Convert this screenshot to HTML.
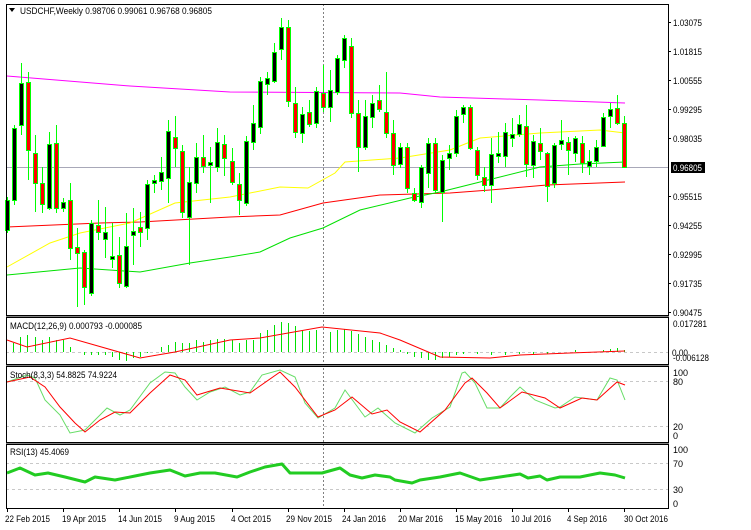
<!DOCTYPE html>
<html><head><meta charset="utf-8"><style>
html,body{margin:0;padding:0;background:#fff;width:751px;height:530px;overflow:hidden}
svg{display:block}
text{font-family:"Liberation Sans",sans-serif;font-size:9px;fill:#000}
.w{stroke:#00ff00;stroke-width:1}
.b{fill:#000;stroke:#00ff00;stroke-width:1}
.r{fill:#ff0000;stroke:#00ff00;stroke-width:1}
.h{stroke:#00e000;stroke-width:1}
</style></head><body>
<svg width="751" height="530" viewBox="0 0 751 530" xmlns="http://www.w3.org/2000/svg">
<!-- gridlines / levels -->
<line x1="6" y1="167.5" x2="668" y2="167.5" stroke="#a8a8b8" stroke-width="1"/>
<g stroke="#c8c8c8" stroke-dasharray="3,3">
<line x1="6" y1="352.5" x2="668" y2="352.5"/>
<line x1="6" y1="381.5" x2="668" y2="381.5"/>
<line x1="6" y1="426.5" x2="668" y2="426.5"/>
<line x1="6" y1="463.5" x2="668" y2="463.5"/>
<line x1="6" y1="489.5" x2="668" y2="489.5"/>
</g>
<line x1="323.5" y1="4" x2="323.5" y2="508" stroke="#808080" stroke-dasharray="2,2"/>

<!-- moving averages -->
<polyline fill="none" stroke="#ff00ff" points="7,76 130,86 230,92 400,93 440,97 540,100 625,103"/>
<polyline fill="none" stroke="#ff0000" points="7,227 100,223 140,222 230,217 280,215 323,203 380,195 450,193 490,190 547,185 625,182"/>
<polyline fill="none" stroke="#ffff00" points="7,267 50,243 80,233 130,223 175,203 230,197 280,187 308,188 335,173 345,162 400,158 450,150 480,138 540,133 600,130 625,133"/>
<polyline fill="none" stroke="#00e000" points="7,275 80,268 140,272 190,263 230,257 260,252 290,238 323,228 360,210 410,198 440,192 480,182 540,167 580,164 625,162"/>

<!-- candles -->
<g id="c">
<line class="w" x1="7.5" y1="197" x2="7.5" y2="233"/><rect class="b" x="5.5" y="200.5" width="4" height="30"/>
<line class="w" x1="14.5" y1="125" x2="14.5" y2="205"/><rect class="b" x="12.5" y="128.5" width="4" height="72"/>
<line class="w" x1="21.5" y1="63" x2="21.5" y2="135"/><rect class="b" x="19.5" y="83.5" width="4" height="42"/>
<line class="w" x1="28.5" y1="72" x2="28.5" y2="180"/><rect class="r" x="26.5" y="82.5" width="4" height="68"/>
<line class="w" x1="35.5" y1="135" x2="35.5" y2="212"/><rect class="r" x="33.5" y="153.5" width="4" height="30"/>
<line class="w" x1="42.5" y1="167" x2="42.5" y2="213"/><rect class="r" x="40.5" y="183.5" width="4" height="21"/>
<line class="w" x1="49.5" y1="132" x2="49.5" y2="210"/><rect class="b" x="47.5" y="144.5" width="4" height="64"/>
<line class="w" x1="56.5" y1="125" x2="56.5" y2="213"/><rect class="r" x="54.5" y="143.5" width="4" height="65"/>
<line class="w" x1="63.5" y1="198" x2="63.5" y2="212"/><rect class="b" x="61.5" y="202.5" width="4" height="6"/>
<line class="w" x1="70.5" y1="183" x2="70.5" y2="260"/><rect class="r" x="68.5" y="200.5" width="4" height="48"/>
<line class="w" x1="77.5" y1="228" x2="77.5" y2="307"/><rect class="r" x="75.5" y="247.5" width="4" height="6"/>
<line class="w" x1="84.5" y1="250" x2="84.5" y2="305"/><rect class="r" x="82.5" y="252.5" width="4" height="35"/>
<line class="w" x1="91.5" y1="220" x2="91.5" y2="296"/><rect class="b" x="89.5" y="223.5" width="4" height="70"/>
<line class="w" x1="98.5" y1="200" x2="98.5" y2="240"/><rect class="r" x="96.5" y="225.5" width="4" height="7"/>
<line class="w" x1="105.5" y1="207" x2="105.5" y2="258"/><rect class="b" x="103.5" y="232.5" width="4" height="7"/>
<line class="w" x1="112.5" y1="223" x2="112.5" y2="268"/><rect class="b" x="110.5" y="256.5" width="4" height="3"/>
<line class="w" x1="119.5" y1="237" x2="119.5" y2="288"/><rect class="r" x="117.5" y="255.5" width="4" height="28"/>
<line class="w" x1="126.5" y1="213" x2="126.5" y2="288"/><rect class="b" x="124.5" y="246.5" width="4" height="40"/>
<line class="w" x1="133.5" y1="208" x2="133.5" y2="265"/><rect class="b" x="131.5" y="231.5" width="4" height="4"/>
<line class="w" x1="140.5" y1="212" x2="140.5" y2="247"/><rect class="r" x="138.5" y="227.5" width="4" height="5"/>
<line class="w" x1="147.5" y1="180" x2="147.5" y2="240"/><rect class="b" x="145.5" y="184.5" width="4" height="44"/>
<line class="w" x1="154.5" y1="175" x2="154.5" y2="193"/><rect class="b" x="152.5" y="180.5" width="4" height="3"/>
<line class="w" x1="161.5" y1="157" x2="161.5" y2="190"/><rect class="b" x="159.5" y="172.5" width="4" height="9"/>
<line class="w" x1="168.5" y1="120" x2="168.5" y2="203"/><rect class="b" x="166.5" y="131.5" width="4" height="47"/>
<line class="w" x1="175.5" y1="116" x2="175.5" y2="167"/><rect class="r" x="173.5" y="137.5" width="4" height="11"/>
<line class="w" x1="182.5" y1="145" x2="182.5" y2="218"/><rect class="r" x="180.5" y="151.5" width="4" height="61"/>
<line class="w" x1="189.5" y1="167" x2="189.5" y2="265"/><rect class="b" x="187.5" y="182.5" width="4" height="35"/>
<line class="w" x1="196.5" y1="143" x2="196.5" y2="193"/><rect class="b" x="194.5" y="157.5" width="4" height="26"/>
<line class="w" x1="203.5" y1="135" x2="203.5" y2="173"/><rect class="r" x="201.5" y="157.5" width="4" height="9"/>
<line class="w" x1="210.5" y1="147" x2="210.5" y2="203"/><rect class="b" x="208.5" y="162.5" width="4" height="3"/>
<line class="w" x1="217.5" y1="128" x2="217.5" y2="172"/><rect class="b" x="215.5" y="142.5" width="4" height="25"/>
<line class="w" x1="224.5" y1="135" x2="224.5" y2="176"/><rect class="r" x="222.5" y="144.5" width="4" height="14"/>
<line class="w" x1="232.5" y1="148" x2="232.5" y2="185"/><rect class="r" x="230.5" y="161.5" width="4" height="21"/>
<line class="w" x1="239.5" y1="173" x2="239.5" y2="215"/><rect class="r" x="237.5" y="184.5" width="4" height="16"/>
<line class="w" x1="246.5" y1="136" x2="246.5" y2="206"/><rect class="b" x="244.5" y="141.5" width="4" height="62"/>
<line class="w" x1="253.5" y1="105" x2="253.5" y2="150"/><rect class="b" x="251.5" y="123.5" width="4" height="19"/>
<line class="w" x1="260.5" y1="77" x2="260.5" y2="134"/><rect class="b" x="258.5" y="81.5" width="4" height="46"/>
<line class="w" x1="267.5" y1="72" x2="267.5" y2="95"/><rect class="b" x="265.5" y="78.5" width="4" height="6"/>
<line class="w" x1="274.5" y1="43" x2="274.5" y2="83"/><rect class="b" x="272.5" y="52.5" width="4" height="29"/>
<line class="w" x1="281.5" y1="18" x2="281.5" y2="60"/><rect class="b" x="279.5" y="27.5" width="4" height="22"/>
<line class="w" x1="288.5" y1="20" x2="288.5" y2="107"/><rect class="r" x="286.5" y="27.5" width="4" height="74"/>
<line class="w" x1="295.5" y1="87" x2="295.5" y2="138"/><rect class="r" x="293.5" y="103.5" width="4" height="29"/>
<line class="w" x1="302.5" y1="107" x2="302.5" y2="143"/><rect class="b" x="300.5" y="114.5" width="4" height="19"/>
<line class="w" x1="309.5" y1="100" x2="309.5" y2="127"/><rect class="r" x="307.5" y="112.5" width="4" height="12"/>
<line class="w" x1="316.5" y1="87" x2="316.5" y2="128"/><rect class="b" x="314.5" y="91.5" width="4" height="32"/>
<line class="w" x1="323.5" y1="65" x2="323.5" y2="112"/><rect class="r" x="321.5" y="93.5" width="4" height="14"/>
<line class="w" x1="330.5" y1="70" x2="330.5" y2="122"/><rect class="b" x="328.5" y="90.5" width="4" height="17"/>
<line class="w" x1="337.5" y1="55" x2="337.5" y2="95"/><rect class="b" x="335.5" y="58.5" width="4" height="34"/>
<line class="w" x1="344.5" y1="35" x2="344.5" y2="68"/><rect class="b" x="342.5" y="38.5" width="4" height="22"/>
<line class="w" x1="351.5" y1="38" x2="351.5" y2="118"/><rect class="r" x="349.5" y="46.5" width="4" height="67"/>
<line class="w" x1="358.5" y1="100" x2="358.5" y2="172"/><rect class="r" x="356.5" y="113.5" width="4" height="34"/>
<line class="w" x1="365.5" y1="100" x2="365.5" y2="150"/><rect class="b" x="363.5" y="116.5" width="4" height="31"/>
<line class="w" x1="372.5" y1="95" x2="372.5" y2="128"/><rect class="b" x="370.5" y="103.5" width="4" height="14"/>
<line class="w" x1="379.5" y1="85" x2="379.5" y2="112"/><rect class="r" x="377.5" y="100.5" width="4" height="9"/>
<line class="w" x1="386.5" y1="72" x2="386.5" y2="138"/><rect class="r" x="384.5" y="112.5" width="4" height="21"/>
<line class="w" x1="393.5" y1="120" x2="393.5" y2="175"/><rect class="r" x="391.5" y="133.5" width="4" height="32"/>
<line class="w" x1="400.5" y1="143" x2="400.5" y2="168"/><rect class="b" x="398.5" y="147.5" width="4" height="17"/>
<line class="w" x1="407.5" y1="143" x2="407.5" y2="193"/><rect class="r" x="405.5" y="147.5" width="4" height="41"/>
<line class="w" x1="414.5" y1="188" x2="414.5" y2="202"/><rect class="r" x="412.5" y="193.5" width="4" height="7"/>
<line class="w" x1="421.5" y1="165" x2="421.5" y2="208"/><rect class="b" x="419.5" y="167.5" width="4" height="35"/>
<line class="w" x1="428.5" y1="138" x2="428.5" y2="188"/><rect class="b" x="426.5" y="143.5" width="4" height="30"/>
<line class="w" x1="435.5" y1="138" x2="435.5" y2="193"/><rect class="r" x="433.5" y="143.5" width="4" height="47"/>
<line class="w" x1="442.5" y1="155" x2="442.5" y2="222"/><rect class="b" x="440.5" y="160.5" width="4" height="32"/>
<line class="w" x1="449.5" y1="145" x2="449.5" y2="170"/><rect class="b" x="447.5" y="153.5" width="4" height="5"/>
<line class="w" x1="456.5" y1="110" x2="456.5" y2="157"/><rect class="b" x="454.5" y="116.5" width="4" height="37"/>
<line class="w" x1="463.5" y1="105" x2="463.5" y2="123"/><rect class="b" x="461.5" y="107.5" width="4" height="7"/>
<line class="w" x1="470.5" y1="105" x2="470.5" y2="150"/><rect class="r" x="468.5" y="107.5" width="4" height="41"/>
<line class="w" x1="477.5" y1="147" x2="477.5" y2="180"/><rect class="r" x="475.5" y="150.5" width="4" height="25"/>
<line class="w" x1="484.5" y1="167" x2="484.5" y2="192"/><rect class="r" x="482.5" y="177.5" width="4" height="8"/>
<line class="w" x1="491.5" y1="138" x2="491.5" y2="203"/><rect class="b" x="489.5" y="154.5" width="4" height="31"/>
<line class="w" x1="498.5" y1="132" x2="498.5" y2="163"/><rect class="b" x="496.5" y="153.5" width="4" height="3"/>
<line class="w" x1="505.5" y1="123" x2="505.5" y2="167"/><rect class="b" x="503.5" y="132.5" width="4" height="24"/>
<line class="w" x1="512.5" y1="118" x2="512.5" y2="147"/><rect class="b" x="510.5" y="134.5" width="4" height="4"/>
<line class="w" x1="519.5" y1="115" x2="519.5" y2="137"/><rect class="b" x="517.5" y="124.5" width="4" height="10"/>
<line class="w" x1="526.5" y1="105" x2="526.5" y2="177"/><rect class="r" x="524.5" y="126.5" width="4" height="38"/>
<line class="w" x1="533.5" y1="135" x2="533.5" y2="178"/><rect class="b" x="531.5" y="141.5" width="4" height="24"/>
<line class="w" x1="540.5" y1="128" x2="540.5" y2="160"/><rect class="r" x="538.5" y="143.5" width="4" height="8"/>
<line class="w" x1="547.5" y1="152" x2="547.5" y2="202"/><rect class="r" x="545.5" y="153.5" width="4" height="33"/>
<line class="w" x1="554.5" y1="143" x2="554.5" y2="188"/><rect class="b" x="552.5" y="145.5" width="4" height="38"/>
<line class="w" x1="561.5" y1="120" x2="561.5" y2="150"/><rect class="b" x="559.5" y="140.5" width="4" height="4"/>
<line class="w" x1="568.5" y1="137" x2="568.5" y2="175"/><rect class="r" x="566.5" y="142.5" width="4" height="8"/>
<line class="w" x1="575.5" y1="136" x2="575.5" y2="162"/><rect class="b" x="573.5" y="138.5" width="4" height="15"/>
<line class="w" x1="582.5" y1="136" x2="582.5" y2="173"/><rect class="r" x="580.5" y="143.5" width="4" height="20"/>
<line class="w" x1="589.5" y1="150" x2="589.5" y2="175"/><rect class="b" x="587.5" y="161.5" width="4" height="5"/>
<line class="w" x1="596.5" y1="140" x2="596.5" y2="167"/><rect class="b" x="594.5" y="147.5" width="4" height="14"/>
<line class="w" x1="603.5" y1="113" x2="603.5" y2="147"/><rect class="b" x="601.5" y="117.5" width="4" height="29"/>
<line class="w" x1="610.5" y1="103" x2="610.5" y2="128"/><rect class="b" x="608.5" y="109.5" width="4" height="7"/>
<line class="w" x1="617.5" y1="95" x2="617.5" y2="125"/><rect class="r" x="615.5" y="108.5" width="4" height="15"/>
<line class="w" x1="624.5" y1="116" x2="624.5" y2="167"/><rect class="r" x="622.5" y="123.5" width="4" height="44"/>
</g>

<!-- MACD histogram -->
<g class="h">
<line x1="13.5" y1="352" x2="13.5" y2="343"/><line x1="20.5" y1="352" x2="20.5" y2="337"/><line x1="27.5" y1="352" x2="27.5" y2="335"/><line x1="35.5" y1="352" x2="35.5" y2="337"/><line x1="42.5" y1="352" x2="42.5" y2="340"/><line x1="49.5" y1="352" x2="49.5" y2="337"/><line x1="56.5" y1="352" x2="56.5" y2="340"/><line x1="63.5" y1="352" x2="63.5" y2="340"/><line x1="70.5" y1="352" x2="70.5" y2="347"/>
<line x1="84.5" y1="352" x2="84.5" y2="355"/><line x1="91.5" y1="352" x2="91.5" y2="355"/><line x1="98.5" y1="352" x2="98.5" y2="355"/><line x1="105.5" y1="352" x2="105.5" y2="355"/><line x1="112.5" y1="352" x2="112.5" y2="357"/><line x1="119.5" y1="352" x2="119.5" y2="360"/><line x1="126.5" y1="352" x2="126.5" y2="361"/><line x1="133.5" y1="352" x2="133.5" y2="358"/><line x1="140.5" y1="352" x2="140.5" y2="357"/><line x1="147.5" y1="352" x2="147.5" y2="353"/>
<line x1="161.5" y1="352" x2="161.5" y2="347"/><line x1="168.5" y1="352" x2="168.5" y2="345"/><line x1="175.5" y1="352" x2="175.5" y2="342"/><line x1="182.5" y1="352" x2="182.5" y2="343"/><line x1="189.5" y1="352" x2="189.5" y2="343"/><line x1="196.5" y1="352" x2="196.5" y2="340"/><line x1="203.5" y1="352" x2="203.5" y2="342"/><line x1="210.5" y1="352" x2="210.5" y2="340"/><line x1="217.5" y1="352" x2="217.5" y2="339"/><line x1="224.5" y1="352" x2="224.5" y2="339"/><line x1="232.5" y1="352" x2="232.5" y2="340"/><line x1="239.5" y1="352" x2="239.5" y2="343"/><line x1="246.5" y1="352" x2="246.5" y2="340"/>
<line x1="253.5" y1="352" x2="253.5" y2="340"/><line x1="260.5" y1="352" x2="260.5" y2="333"/><line x1="267.5" y1="352" x2="267.5" y2="330"/><line x1="274.5" y1="352" x2="274.5" y2="325"/><line x1="281.5" y1="352" x2="281.5" y2="322"/><line x1="288.5" y1="352" x2="288.5" y2="323"/><line x1="295.5" y1="352" x2="295.5" y2="326"/><line x1="302.5" y1="352" x2="302.5" y2="330"/><line x1="309.5" y1="352" x2="309.5" y2="331"/><line x1="316.5" y1="352" x2="316.5" y2="330"/><line x1="330.5" y1="352" x2="330.5" y2="332"/><line x1="337.5" y1="352" x2="337.5" y2="330"/><line x1="344.5" y1="352" x2="344.5" y2="329"/><line x1="351.5" y1="352" x2="351.5" y2="331"/><line x1="358.5" y1="352" x2="358.5" y2="334"/><line x1="365.5" y1="352" x2="365.5" y2="337"/><line x1="372.5" y1="352" x2="372.5" y2="340"/><line x1="379.5" y1="352" x2="379.5" y2="342"/><line x1="386.5" y1="352" x2="386.5" y2="345"/><line x1="393.5" y1="352" x2="393.5" y2="348"/><line x1="400.5" y1="352" x2="400.5" y2="350"/>
<line x1="407.5" y1="352" x2="407.5" y2="354"/><line x1="414.5" y1="352" x2="414.5" y2="357"/><line x1="421.5" y1="352" x2="421.5" y2="358"/><line x1="428.5" y1="352" x2="428.5" y2="360"/><line x1="435.5" y1="352" x2="435.5" y2="360"/><line x1="442.5" y1="352" x2="442.5" y2="358"/><line x1="449.5" y1="352" x2="449.5" y2="357"/><line x1="456.5" y1="352" x2="456.5" y2="355"/><line x1="463.5" y1="352" x2="463.5" y2="354"/><line x1="477.5" y1="352" x2="477.5" y2="354"/><line x1="491.5" y1="352" x2="491.5" y2="355"/><line x1="505.5" y1="352" x2="505.5" y2="355"/><line x1="519.5" y1="352" x2="519.5" y2="354"/><line x1="533.5" y1="352" x2="533.5" y2="354"/><line x1="547.5" y1="352" x2="547.5" y2="354"/><line x1="575.5" y1="352" x2="575.5" y2="350"/><line x1="603.5" y1="352" x2="603.5" y2="350"/><line x1="610.5" y1="352" x2="610.5" y2="349"/><line x1="617.5" y1="352" x2="617.5" y2="348"/><line x1="624.5" y1="352" x2="624.5" y2="350"/>
</g>
<polyline fill="none" stroke="#ff0000" points="7,340 27,347 70,338 140,358 175,352 230,340 260,338 322,327 380,333 400,340 440,357 490,358 520,355 570,353 625,351"/>

<!-- Stochastic -->
<polyline fill="none" stroke="#66dd66" points="7,382 27,375 35,378 45,400 60,415 70,433 85,430 100,415 107,408 120,415 130,410 150,383 165,372 175,373 185,387 197,400 210,392 225,387 240,395 250,392 262,375 280,370 295,377 305,403 318,418 335,408 345,390 365,417 378,408 395,423 415,433 432,418 450,407 462,373 465,372 475,383 487,408 500,408 510,397 520,387 535,400 555,408 560,407 575,397 597,400 610,378 617,380 625,400"/>
<polyline fill="none" stroke="#ff0000" points="7,382 30,377 45,387 60,407 75,423 85,432 100,420 115,412 130,413 150,393 170,375 185,380 197,395 220,388 250,393 280,372 295,387 318,417 335,410 352,397 372,414 387,410 400,422 420,432 445,410 465,383 472,378 487,393 500,408 522,392 545,398 560,408 582,398 597,400 617,382 625,385"/>

<!-- RSI -->
<polyline fill="none" stroke="#22cc22" stroke-width="3" stroke-linejoin="round" points="7,473 20,468 35,475 48,473 65,477 85,482 95,477 115,480 135,476 150,473 170,470 185,476 200,473 215,473 237,477 250,472 265,467 282,464 290,473 310,473 322,473 340,468 350,475 362,478 375,475 390,477 395,480 412,483 420,480 440,477 460,473 480,480 500,477 520,474 528,478 540,476 547,480 560,477 580,477 600,473 615,475 625,478"/>

<!-- panel frames -->
<g fill="none" stroke="#000" stroke-width="1">
<rect x="6.5" y="4.5" width="662" height="311"/>
<rect x="6.5" y="317.5" width="662" height="47"/>
<rect x="6.5" y="366.5" width="662" height="76"/>
<rect x="6.5" y="444.5" width="662" height="64"/>
</g>
<line x1="6" y1="316.5" x2="669" y2="316.5" stroke="#808080"/>
<line x1="6" y1="365.5" x2="669" y2="365.5" stroke="#808080"/>
<line x1="6" y1="443.5" x2="669" y2="443.5" stroke="#808080"/>

<!-- axis ticks -->
<g stroke="#000">
<line x1="668" y1="22.5" x2="671" y2="22.5"/><line x1="668" y1="51.5" x2="671" y2="51.5"/><line x1="668" y1="80.5" x2="671" y2="80.5"/><line x1="668" y1="109.5" x2="671" y2="109.5"/><line x1="668" y1="138.5" x2="671" y2="138.5"/><line x1="668" y1="196.5" x2="671" y2="196.5"/><line x1="668" y1="225.5" x2="671" y2="225.5"/><line x1="668" y1="254.5" x2="671" y2="254.5"/><line x1="668" y1="283.5" x2="671" y2="283.5"/><line x1="668" y1="312.5" x2="671" y2="312.5"/>
<line x1="7.5" y1="508" x2="7.5" y2="512"/><line x1="63.5" y1="508" x2="63.5" y2="512"/><line x1="119.5" y1="508" x2="119.5" y2="512"/><line x1="175.5" y1="508" x2="175.5" y2="512"/><line x1="232.5" y1="508" x2="232.5" y2="512"/><line x1="288.5" y1="508" x2="288.5" y2="512"/><line x1="344.5" y1="508" x2="344.5" y2="512"/><line x1="400.5" y1="508" x2="400.5" y2="512"/><line x1="456.5" y1="508" x2="456.5" y2="512"/><line x1="512.5" y1="508" x2="512.5" y2="512"/><line x1="568.5" y1="508" x2="568.5" y2="512"/><line x1="624.5" y1="508" x2="624.5" y2="512"/>
</g>

<!-- header -->
<path d="M9 8 L15 8 L12 12 Z" fill="#000"/>
<text x="20" y="14" textLength="192" lengthAdjust="spacingAndGlyphs">USDCHF,Weekly  0.98706 0.99061 0.96768 0.96805</text>
<text x="10" y="329" textLength="132" lengthAdjust="spacingAndGlyphs">MACD(12,26,9) 0.000793 -0.000085</text>
<text x="10" y="378" textLength="107" lengthAdjust="spacingAndGlyphs">Stoch(8,3,3) 54.8825 74.9224</text>
<text x="10" y="455" textLength="59" lengthAdjust="spacingAndGlyphs">RSI(13) 45.4069</text>

<!-- price axis -->
<g>
<text x="673" y="26" textLength="29" lengthAdjust="spacingAndGlyphs">1.03075</text>
<text x="673" y="55" textLength="29" lengthAdjust="spacingAndGlyphs">1.01815</text>
<text x="673" y="84" textLength="29" lengthAdjust="spacingAndGlyphs">1.00555</text>
<text x="673" y="113" textLength="29" lengthAdjust="spacingAndGlyphs">0.99295</text>
<text x="673" y="142" textLength="29" lengthAdjust="spacingAndGlyphs">0.98035</text>
<rect x="671" y="162" width="34" height="11" fill="#000"/>
<text x="673" y="171" textLength="29" lengthAdjust="spacingAndGlyphs" style="fill:#fff">0.96805</text>
<text x="673" y="200" textLength="29" lengthAdjust="spacingAndGlyphs">0.95515</text>
<text x="673" y="229" textLength="29" lengthAdjust="spacingAndGlyphs">0.94255</text>
<text x="673" y="258" textLength="29" lengthAdjust="spacingAndGlyphs">0.92995</text>
<text x="673" y="287" textLength="29" lengthAdjust="spacingAndGlyphs">0.91735</text>
<text x="673" y="316" textLength="29" lengthAdjust="spacingAndGlyphs">0.90475</text>
<text x="673" y="327" textLength="34" lengthAdjust="spacingAndGlyphs">0.017281</text>
<text x="672" y="356" textLength="16" lengthAdjust="spacingAndGlyphs">0.00</text>
<text x="673" y="361" textLength="36" lengthAdjust="spacingAndGlyphs">-0.006128</text>
<text x="673" y="376">100</text>
<text x="673" y="385">80</text>
<text x="673" y="430">20</text>
<text x="673" y="439">0</text>
<text x="673" y="453">100</text>
<text x="673" y="467">70</text>
<text x="673" y="493">30</text>
<text x="673" y="507">0</text>
</g>

<!-- date axis -->
<g>
<text x="5" y="522" textLength="45" lengthAdjust="spacingAndGlyphs">22 Feb 2015</text>
<text x="62" y="522" textLength="44" lengthAdjust="spacingAndGlyphs">19 Apr 2015</text>
<text x="118" y="522" textLength="44" lengthAdjust="spacingAndGlyphs">14 Jun 2015</text>
<text x="174" y="522" textLength="41" lengthAdjust="spacingAndGlyphs">9 Aug 2015</text>
<text x="231" y="522" textLength="40" lengthAdjust="spacingAndGlyphs">4 Oct 2015</text>
<text x="286" y="522" textLength="46" lengthAdjust="spacingAndGlyphs">29 Nov 2015</text>
<text x="342" y="522" textLength="44" lengthAdjust="spacingAndGlyphs">24 Jan 2016</text>
<text x="398" y="522" textLength="45" lengthAdjust="spacingAndGlyphs">20 Mar 2016</text>
<text x="455" y="522" textLength="47" lengthAdjust="spacingAndGlyphs">15 May 2016</text>
<text x="511" y="522" textLength="40" lengthAdjust="spacingAndGlyphs">10 Jul 2016</text>
<text x="567" y="522" textLength="40" lengthAdjust="spacingAndGlyphs">4 Sep 2016</text>
<text x="624" y="522" textLength="44" lengthAdjust="spacingAndGlyphs">30 Oct 2016</text>
</g>
</svg>
</body></html>
